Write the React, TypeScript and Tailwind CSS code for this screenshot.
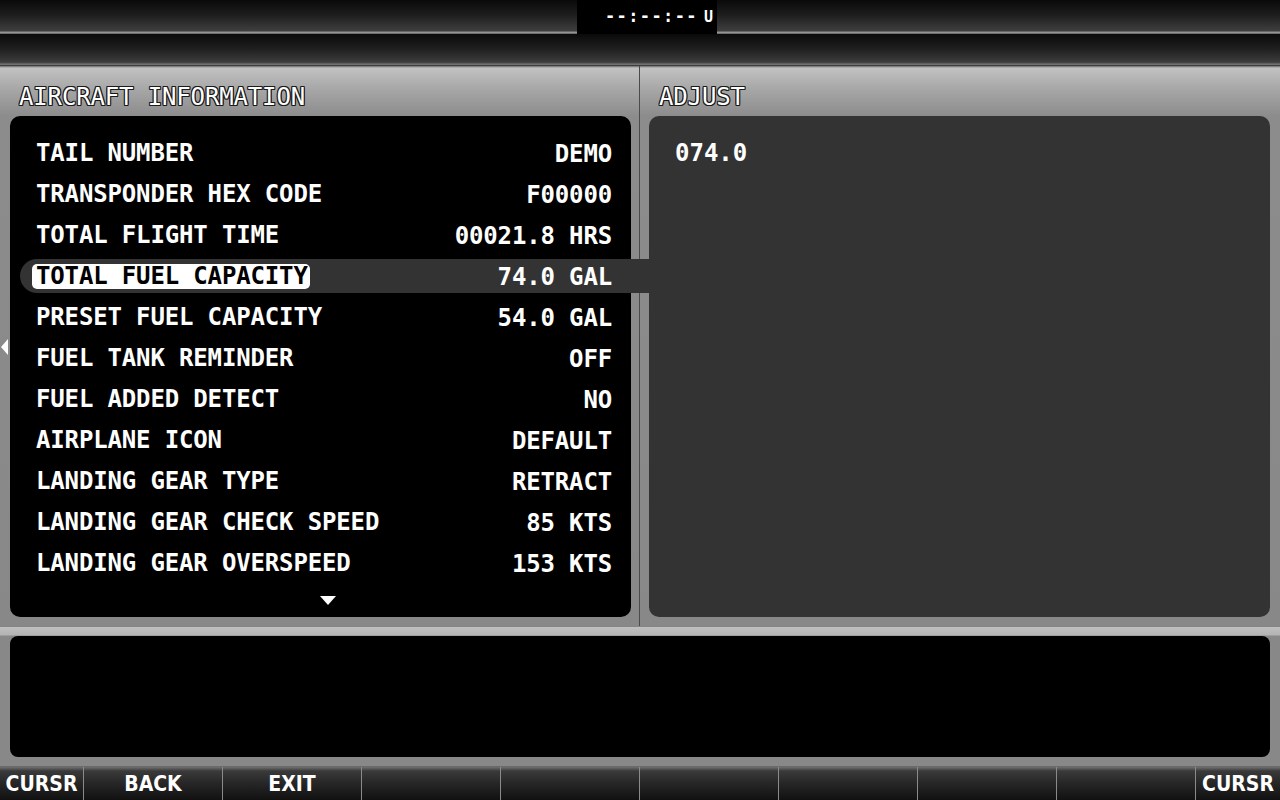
import React from "react";

const rows: [string, string][] = [
  ["TAIL NUMBER", "DEMO"],
  ["TRANSPONDER HEX CODE", "F00000"],
  ["TOTAL FLIGHT TIME", "00021.8 HRS"],
  ["TOTAL FUEL CAPACITY", "74.0 GAL"],
  ["PRESET FUEL CAPACITY", "54.0 GAL"],
  ["FUEL TANK REMINDER", "OFF"],
  ["FUEL ADDED DETECT", "NO"],
  ["AIRPLANE ICON", "DEFAULT"],
  ["LANDING GEAR TYPE", "RETRACT"],
  ["LANDING GEAR CHECK SPEED", "85 KTS"],
  ["LANDING GEAR OVERSPEED", "153 KTS"],
];

const selected = 3;

const mono = "font-['DejaVu_Sans_Mono',monospace]";
const outline =
  "[text-shadow:-1px_-1px_0_#1a1a1a,1px_-1px_0_#1a1a1a,-1px_1px_0_#1a1a1a,1px_1px_0_#1a1a1a,0_1px_0_#1a1a1a,0_-1px_0_#1a1a1a,1px_0_0_#1a1a1a,-1px_0_0_#1a1a1a]";
const panelBg =
  "bg-[linear-gradient(to_bottom,#6a6a6a_0px,#c2c2c2_2px,#a8a8a8_22px,#8c8c8c_50px,#888_100%)]";

const softkeys = ["CURSR", "BACK", "EXIT", "", "", "", "", "", "", "CURSR"];

export default function App() {
  return (
    <div className="w-[1280px] h-[800px] bg-black flex flex-col overflow-hidden select-none">
      {/* top status bar */}
      <div className="h-[34px] flex bg-[linear-gradient(to_bottom,#0a0a0a,#1e1e1e_45%,#3e3e3e_90%,#9a9a9a_96%,#555)]">
        <div className="w-[577px]" />
        <div
          className={clsx(
            "w-[140px] h-[34px] bg-black flex items-center justify-end pr-[4px] text-white text-[17px] font-bold",
            mono
          )}
        >
          <span className="tracking-[1.4px]">--:--:--</span>
          <span className="ml-[6px] text-[15px]">U</span>
        </div>
        <div className="flex-1" />
      </div>
      <div className="h-[32px] bg-[linear-gradient(to_bottom,#0a0a0a,#1e1e1e_45%,#3c3c3c_88%,#777_95%,#222)]" />

      {/* main panels */}
      <div className="h-[560px] flex">
        <div className={clsx("w-[639px] flex flex-col", panelBg)}>
          <div
            className={clsx(
              "h-[50px] flex items-center pl-[19px] pt-[11px] text-white text-[24px] tracking-[-0.15px]",
              mono,
              outline
            )}
          >
            AIRCRAFT INFORMATION
          </div>
          <div className="ml-[10px] w-[621px] h-[501px] bg-black rounded-[10px] pt-[17px] relative">
            {rows.map(([label, value], i) => {
              const active = i === selected;
              return (
                <div
                  key={label}
                  className={clsx(
                    "relative h-[41px] flex items-center justify-between pl-[26px] pr-[19px] text-white text-[24px] font-bold tracking-[-0.15px]",
                    mono
                  )}
                >
                  {active && (
                    <div className="absolute left-[10px] right-[-19px] top-[3px] h-[34px] bg-[#333] rounded-l-full z-10" />
                  )}
                  <span
                    className={clsx(
                      "relative z-20 leading-[25px]",
                      active && "bg-white text-black rounded-[5px] -ml-[4px] pl-[4px] pr-[2px]"
                    )}
                  >
                    {label}
                  </span>
                  <span className="relative z-20">{value}</span>
                </div>
              );
            })}
            <div className="absolute left-[310px] bottom-[12px] w-0 h-0 border-l-[8px] border-r-[8px] border-t-[9px] border-l-transparent border-r-transparent border-t-white" />
          </div>
        </div>
        <div className="w-px bg-[#4a4a4a]" />
        <div className={clsx("w-[640px] flex flex-col", panelBg)}>
          <div
            className={clsx(
              "h-[50px] flex items-center pl-[19px] pt-[11px] text-white text-[24px] tracking-[-0.15px]",
              mono,
              outline
            )}
          >
            ADJUST
          </div>
          <div
            className={clsx(
              "ml-[9px] w-[621px] h-[501px] bg-[#333] rounded-[10px] pt-[17px] pl-[26px] text-white text-[24px] font-bold leading-[41px]",
              mono
            )}
          >
            074.0
          </div>
        </div>
      </div>

      {/* message panel */}
      <div className="h-[141px] flex flex-col bg-[linear-gradient(to_bottom,#4a4a4a_0px,#c0c0c0_1px,#b4b4b4_9px,#888_10px,#888_100%)] pt-[10px] px-[10px] border-b border-[#6a6a6a]">
        <div className="h-[121px] bg-black rounded-[8px]" />
      </div>

      {/* softkeys */}
      <div className="h-[33px] flex">
        {softkeys.map((k, i) => (
          <div
            key={i}
            className={clsx(
              "h-full flex items-center justify-center pt-[3px] text-white text-[21px] font-bold font-['DejaVu_Sans_Condensed','DejaVu_Sans',sans-serif] bg-[linear-gradient(to_bottom,#707070,#3a3a3a_12%,#262626_50%,#111)]",
              i === 0 ? "w-[83px]" : i === 9 ? "flex-1" : "w-[139px]",
              i > 0 && "border-l border-[#8a8a8a]"
            )}
          >
            {k}
          </div>
        ))}
      </div>

      {/* left edge page marker */}
      <div className="fixed left-[1px] top-[339px] w-0 h-0 border-t-[8px] border-b-[8px] border-r-[7px] border-t-transparent border-b-transparent border-r-white" />
    </div>
  );
}

function clsx(...parts: (string | false | undefined | null)[]) {
  return parts.filter(Boolean).join(" ");
}
